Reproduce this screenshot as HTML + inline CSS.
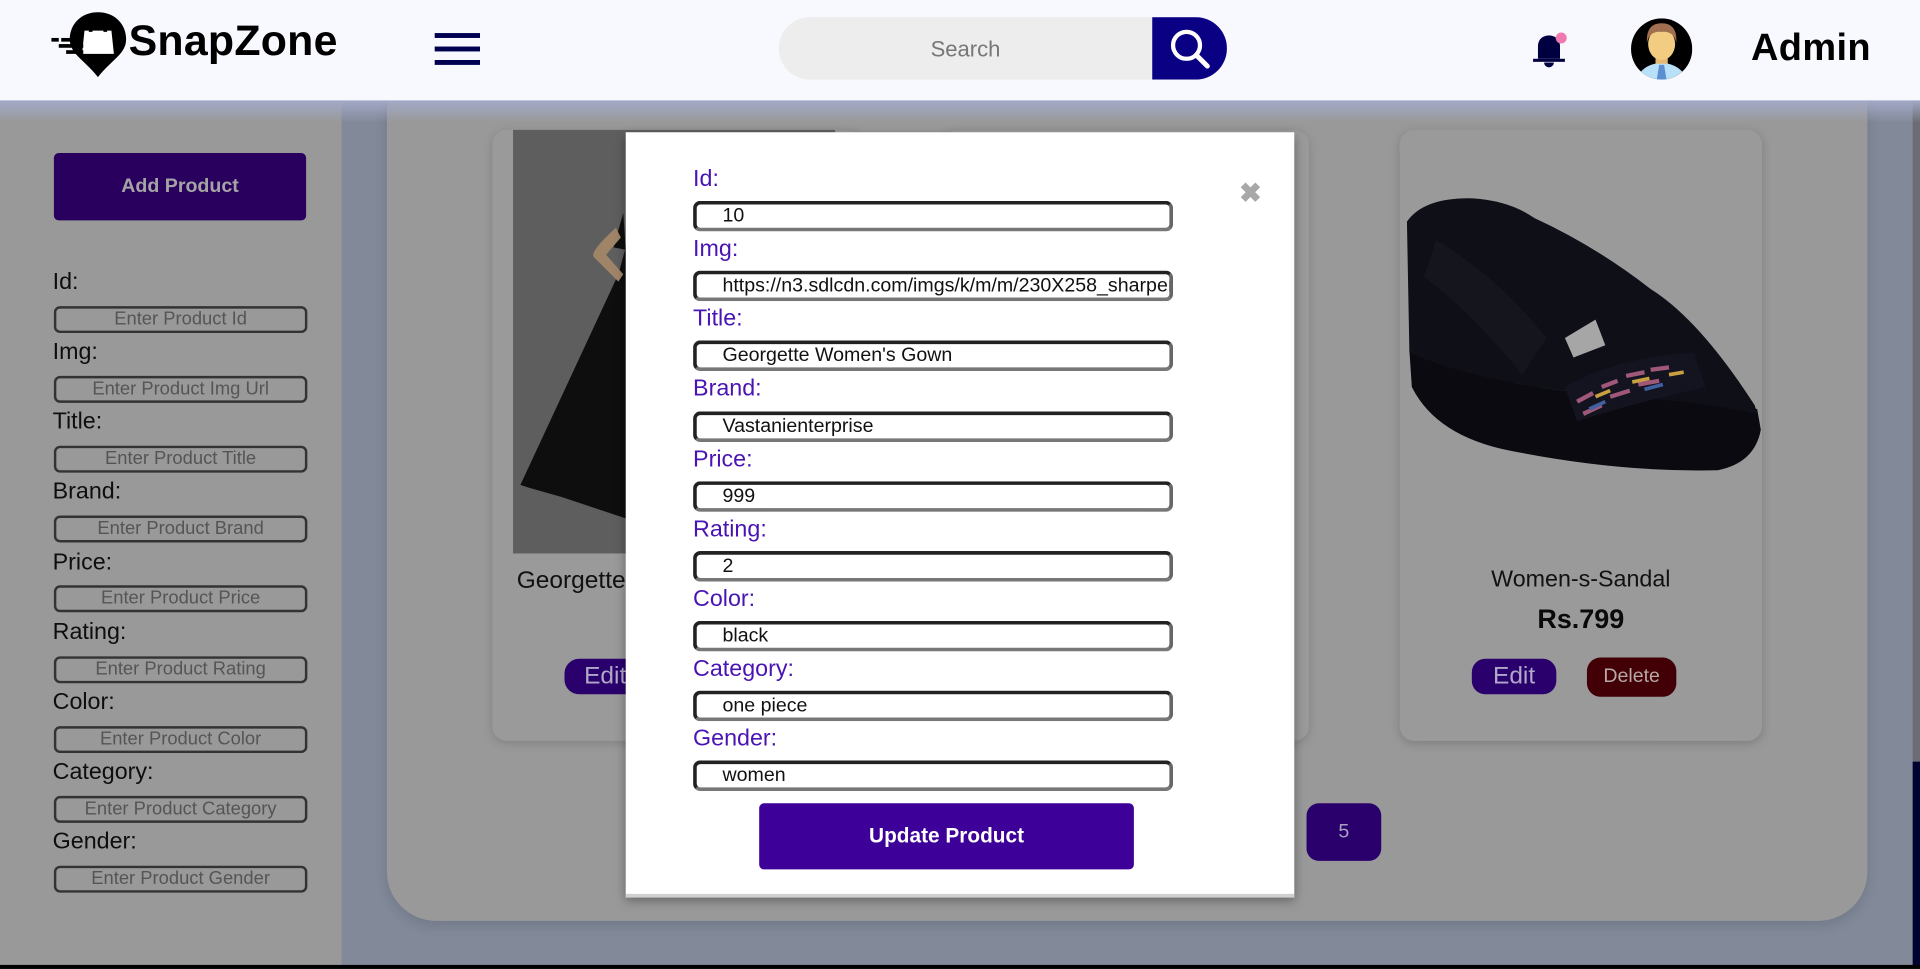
<!DOCTYPE html>
<html><head><meta charset="utf-8">
<style>
html,body{margin:0;padding:0;width:1920px;height:969px;overflow:hidden;background:#000;}
#w{position:absolute;left:0;top:0;width:1568px;height:791px;transform:scale(1.22449);transform-origin:0 0;font-family:"Liberation Sans",sans-serif;background:#828a9a;overflow:hidden;}
.a{position:absolute;}
.sl{position:absolute;left:43px;font-size:19px;color:#0e0e0e;}
.si{position:absolute;left:44px;width:203px;height:18px;border:2px solid #333;border-radius:5px;font-size:15px;color:#555;text-align:center;line-height:18px;white-space:nowrap;overflow:hidden;}
.ml{position:absolute;left:566px;font-size:19px;color:#4a14b4;}
.mi{position:absolute;left:566px;height:19px;border:3px solid #222;border-bottom-color:#777;border-right-color:#666;border-radius:6px;font-size:16px;color:#111;line-height:19px;padding-left:21px;box-sizing:content-box;white-space:nowrap;overflow:hidden;width:365px;}
</style></head><body>
<div id="w">
<div class="a" style="left:0;top:82px;width:279px;height:709px;background:#999999;"></div>
<div class="a" style="left:279px;top:82px;width:1289px;height:709px;background:#828a9a;"></div>
<div class="a" style="left:316px;top:60px;width:1209px;height:692px;background:#999;border-radius:0 0 40px 40px;box-shadow:0 4px 10px rgba(0,0,0,.12);"></div>
<div class="a" style="left:1562px;top:82px;width:6px;height:540px;background:#6c6d74;"></div>
<div class="a" style="left:1562px;top:622px;width:6px;height:169px;background:#020230;"></div>
<div class="a" style="left:0;top:82px;width:1568px;height:18px;background:linear-gradient(#a3a9c6,rgba(160,166,190,0));"></div>
<div class="a" style="left:0;top:788px;width:1568px;height:3px;background:#000;"></div>

<div class="a" style="left:44px;top:125px;width:206px;height:55px;background:#29005e;border-radius:4px;color:#a4a4a4;font-weight:bold;font-size:16px;text-align:center;line-height:55px;">Add Product</div>
<div class="sl" style="top:220px">Id:</div><div class="si" style="top:250px">Enter Product Id</div>
<div class="sl" style="top:277px">Img:</div><div class="si" style="top:307px">Enter Product Img Url</div>
<div class="sl" style="top:334px">Title:</div><div class="si" style="top:364px">Enter Product Title</div>
<div class="sl" style="top:391px">Brand:</div><div class="si" style="top:421px">Enter Product Brand</div>
<div class="sl" style="top:449px">Price:</div><div class="si" style="top:478px">Enter Product Price</div>
<div class="sl" style="top:506px">Rating:</div><div class="si" style="top:536px">Enter Product Rating</div>
<div class="sl" style="top:563px">Color:</div><div class="si" style="top:593px">Enter Product Color</div>
<div class="sl" style="top:620px">Category:</div><div class="si" style="top:650px">Enter Product Category</div>
<div class="sl" style="top:677px">Gender:</div><div class="si" style="top:707px">Enter Product Gender</div>

<div class="a" style="left:402px;top:106px;width:300px;height:499px;background:#9a9a9a;border-radius:12px;box-shadow:0 2px 8px rgba(0,0,0,.15);overflow:hidden;">
  <div class="a" style="left:17px;top:0;width:263px;height:346px;background:#5e5e5e;">
    <svg class="a" style="left:0;top:0" width="263" height="346"><path d="M92 96 L86 118 L6 290 L12 292 L40 300 L100 320 L120 330 L263 330 L263 60 Z" fill="#0e0e0e"/><path d="M90 68 L82 96 L92 98 Z" fill="#0e0e0e"/><path d="M84 80 Q62 100 66 104 Q76 114 86 124 L90 118 L76 102 L88 88 Z" fill="#a08468"/></svg>
  </div>
  <div class="a" style="left:20px;top:357px;font-size:20px;color:#111;">Georgette Women's Gown</div>
  <div class="a" style="left:59px;top:432px;width:70px;height:29px;background:#2a006c;border-radius:12px;color:#b0a8c8;font-size:20px;line-height:29px;padding-left:16px;">Edit</div>
</div>
<div class="a" style="left:770px;top:106px;width:299px;height:499px;background:#9a9a9a;border-radius:12px;box-shadow:0 2px 8px rgba(0,0,0,.15);"></div>
<div class="a" style="left:1143px;top:106px;width:296px;height:499px;background:#9a9a9a;border-radius:12px;box-shadow:0 2px 8px rgba(0,0,0,.18);">
  <svg class="a" style="left:0;top:0" width="296" height="300">
    <path d="M8 180 L10 210 Q30 250 90 262 Q180 280 260 278 Q290 272 295 245 L292 228 Q250 222 150 215 Q60 205 8 180 Z" fill="#0a0a10"/>
    <path d="M6 75 Q20 55 60 56 Q90 58 110 72 Q160 95 205 130 Q245 155 290 225 L292 232 Q250 222 150 215 Q60 205 8 182 Z" fill="#0f0f18"/>
    <path d="M30 90 Q80 120 120 170 L100 200 Q60 150 20 120 Z" fill="#15151e"/>
    <path d="M135 170 L160 155 L168 176 L142 186 Z" fill="#a6a6a6"/>
    <path d="M135 210 Q180 185 240 182 L250 210 Q195 222 145 238 Z" fill="#141420"/>
    <path d="M145 222 L158 215 M165 210 L178 205 M185 201 L200 198 M205 196 L220 194 M150 232 L165 225 M172 218 L188 213 M195 208 L212 205" stroke="#a05878" stroke-width="3.5"/>
    <path d="M160 218 L172 213 M190 206 L204 203 M220 200 L232 198" stroke="#c8a040" stroke-width="3"/>
    <path d="M155 228 L168 222 M200 212 L215 208" stroke="#4060a0" stroke-width="3"/>
  </svg>
  <div class="a" style="left:0;top:357px;width:296px;text-align:center;font-size:19px;color:#111;">Women-s-Sandal</div>
  <div class="a" style="left:0;top:387px;width:296px;text-align:center;font-size:22px;font-weight:bold;color:#0a0a0a;">Rs.799</div>
  <div class="a" style="left:59px;top:432px;width:69px;height:29px;background:#2a006c;border-radius:11px;color:#b0a8c8;font-size:20px;line-height:29px;text-align:center;">Edit</div>
  <div class="a" style="left:153px;top:431px;width:73px;height:32px;background:#420006;border-radius:11px;color:#b8a8a8;font-size:16px;line-height:32px;text-align:center;">Delete</div>
</div>
<div class="a" style="left:1067px;top:656px;width:61px;height:47px;background:#2a006c;border-radius:10px;color:#a8a0c0;font-size:16px;line-height:47px;text-align:center;">5</div>

<div class="a" style="left:0;top:0;width:1568px;height:82px;background:#f8f8ff;">
  <svg class="a" style="left:40px;top:8px" width="70" height="58" viewBox="0 0 70 58">
    <path d="M40 2 C26 2 17 12 17 24 C17 36 28 40 40 55 C52 40 63 36 63 24 C63 12 54 2 40 2 Z" fill="#000"/>
    <path d="M29 17 L51 17 L53 36 L27 36 Z" fill="#fff"/>
    <path d="M34 18 C34 9 46 9 46 18" stroke="#000" stroke-width="3" fill="none"/>
    <rect x="2" y="23" width="6" height="3" fill="#000"/><rect x="10" y="23" width="16" height="3" fill="#000"/>
    <rect x="8" y="28" width="20" height="3" fill="#000"/><rect x="14" y="33" width="14" height="3" fill="#000"/>
  </svg>
  <div class="a" style="left:105px;top:14px;font-size:35px;font-weight:bold;color:#000;letter-spacing:0.2px;">SnapZone</div>
  <div class="a" style="left:355px;top:27px;width:37px;height:4px;background:#000050;"></div>
  <div class="a" style="left:355px;top:38px;width:37px;height:4px;background:#000050;"></div>
  <div class="a" style="left:355px;top:49px;width:37px;height:4px;background:#000050;"></div>
  <div class="a" style="left:636px;top:14px;width:366px;height:51px;background:#ededed;border-radius:26px;overflow:hidden;">
    <div class="a" style="left:0;top:1px;width:305px;text-align:center;line-height:51px;font-size:18px;color:#777;">Search</div>
    <div class="a" style="left:305px;top:0;width:61px;height:51px;background:#0a0084;">
      <svg width="61" height="51"><circle cx="28" cy="23" r="11" stroke="#fff" stroke-width="3.5" fill="none"/><path d="M36 31 L45 40" stroke="#fff" stroke-width="4" stroke-linecap="round"/></svg>
    </div>
  </div>
  <svg class="a" style="left:1248px;top:24px" width="34" height="34" viewBox="0 0 34 34"><path d="M8 24 L8 14 C8 8 12 5 17 5 C22 5 26 8 26 14 L26 24 Z" fill="#000040"/><rect x="4" y="24" width="26" height="2.5" fill="#000040"/><path d="M13 27 a4 4 0 0 0 8 0 Z" fill="#000040"/><circle cx="27" cy="7" r="4.5" fill="#f07ab0"/></svg>
  <svg class="a" style="left:1332px;top:15px" width="50" height="50" viewBox="0 0 50 50"><defs><clipPath id="c"><circle cx="25" cy="25" r="25"/></clipPath></defs><g clip-path="url(#c)"><rect width="50" height="50" fill="#000"/><path d="M5 50 Q8 38 25 36 Q42 38 45 50 Z" fill="#b8e0f8"/><path d="M23 38 L27 38 L29 50 L21 50 Z" fill="#5d8fd0"/><rect x="20" y="28" width="10" height="9" fill="#e8b870"/><ellipse cx="25" cy="21" rx="11" ry="13" fill="#f2cc80"/><path d="M13 20 Q12 4 25 4 Q38 4 37 20 Q35 10 25 11 Q15 10 13 20 Z" fill="#a07050"/></g></svg>
  <div class="a" style="left:1430px;top:21px;font-size:31px;font-weight:bold;color:#000;letter-spacing:0.3px;">Admin</div>
</div>

<div class="a" style="left:511px;top:108px;width:546px;height:625px;background:#fff;box-shadow:0 3px 8px rgba(0,0,0,.35);border-bottom:3px solid #cfcfcf;box-sizing:border-box;">
  <div class="a" style="left:501px;top:37px;font-size:22px;color:#a8a8a8;font-weight:bold;">&#10006;</div>
</div>
<div class="ml" style="top:136px">Id:</div><div class="mi" style="top:164px">10</div>
<div class="ml" style="top:193px">Img:</div><div class="mi" style="top:221px">https://n3.sdlcdn.com/imgs/k/m/m/230X258_sharpened</div>
<div class="ml" style="top:250px">Title:</div><div class="mi" style="top:278px">Georgette Women's Gown</div>
<div class="ml" style="top:307px">Brand:</div><div class="mi" style="top:336px">Vastanienterprise</div>
<div class="ml" style="top:365px">Price:</div><div class="mi" style="top:393px">999</div>
<div class="ml" style="top:422px">Rating:</div><div class="mi" style="top:450px">2</div>
<div class="ml" style="top:479px">Color:</div><div class="mi" style="top:507px">black</div>
<div class="ml" style="top:536px">Category:</div><div class="mi" style="top:564px">one piece</div>
<div class="ml" style="top:593px">Gender:</div><div class="mi" style="top:621px">women</div>
<div class="a" style="left:620px;top:656px;width:306px;height:54px;background:#3d0099;border-radius:4px;color:#fff;font-weight:bold;font-size:17px;text-align:center;line-height:54px;">Update Product</div>
</div>
</body></html>
